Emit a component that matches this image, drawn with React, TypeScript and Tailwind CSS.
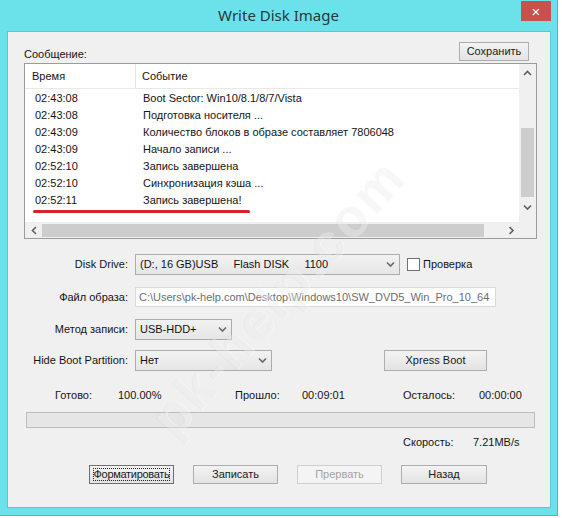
import type { ReactNode } from "react";

// ─── Data ─────────────────────────────────────────────────────────────────────

const LOG_ROWS: [string, string][] = [
  ["02:43:08", "Boot Sector: Win10/8.1/8/7/Vista"],
  ["02:43:08", "Подготовка носителя ..."],
  ["02:43:09", "Количество блоков в образе составляет 7806048"],
  ["02:43:09", "Начало записи ..."],
  ["02:52:10", "Запись завершена"],
  ["02:52:10", "Синхронизация кэша ..."],
  ["02:52:11", "Запись завершена!"],
];

// ─── Small glyphs ─────────────────────────────────────────────────────────────

function Chevron({ dir, className = "" }: { dir: "up" | "down" | "left" | "right"; className?: string }) {
  const pts = {
    up: "1,5 4.5,1.5 8,5",
    down: "1,1.5 4.5,5 8,1.5",
    left: "5,1 1.5,4.5 5,8",
    right: "1.5,1 5,4.5 1.5,8",
  }[dir];
  const vert = dir === "up" || dir === "down";
  return (
    <svg
      width={vert ? 9 : 7}
      height={vert ? 7 : 9}
      viewBox={vert ? "0 0 9 7" : "0 0 7 9"}
      className={className}
    >
      <polyline points={pts} fill="none" stroke="currentColor" strokeWidth="1.6" />
    </svg>
  );
}

function WinButton({
  children,
  className = "",
  disabled = false,
}: {
  children: ReactNode;
  className?: string;
  disabled?: boolean;
}) {
  return (
    <button
      type="button"
      className={[
        "flex items-center justify-center h-[19px] border leading-none",
        disabled
          ? "border-[#cfcfcf] bg-[#f4f4f4] text-[#a3a3a3]"
          : "border-[#adadad] bg-linear-to-b from-[#f3f3f3] to-[#e3e3e3] text-[#1a1a1a]",
        className,
      ].join(" ")}
    >
      {children}
    </button>
  );
}

function Combo({ value, className = "" }: { value: ReactNode; className?: string }) {
  return (
    <div
      className={`flex items-center h-[21px] border border-[#acacac] bg-linear-to-b from-[#f2f2f2] to-[#e6e6e6] pl-[4px] pr-[4px] ${className}`}
    >
      <span className="flex-1 whitespace-pre text-[#111]">{value}</span>
      <Chevron dir="down" className="text-[#6a6a6a]" />
    </div>
  );
}

// ─── Log list ─────────────────────────────────────────────────────────────────

function LogList() {
  return (
    <div className="ml-[16px] mt-[2px] w-[513px] h-[176px] border border-[#9b9b9b] bg-white flex flex-col">
      <div className="flex flex-1 min-h-0">
        <div className="flex-1 flex flex-col">
          {/* column header */}
          <div className="flex h-[25px] items-center border-b border-[#e8e8e8]">
            <div className="w-[111px] h-full flex items-center pl-[7px] border-r border-[#e5e5e5]">Время</div>
            <div className="pl-[6px]">Событие</div>
          </div>
          <div className="pt-[1px]">
            {LOG_ROWS.map(([time, msg], i) => (
              <div key={i} className="flex h-[17px] items-center whitespace-nowrap">
                <span className="w-[118px] pl-[10px]">{time}</span>
                <span>{msg}</span>
              </div>
            ))}
          </div>
          <div className="ml-[8px] mt-[1px] w-[217px] h-[3px] rounded-full bg-[#d8202c]" />
        </div>
        {/* vertical scrollbar */}
        <div className="w-[17px] bg-[#f0f0f0] flex flex-col items-center">
          <Chevron dir="up" className="mt-[6px] text-[#606060]" />
          <div className="mt-[51px] w-[13px] h-[69px] bg-[#cdcdcd]" />
          <Chevron dir="down" className="mt-[7px] text-[#606060]" />
        </div>
      </div>
      {/* horizontal scrollbar */}
      <div className="flex h-[16px] bg-[#f0f0f0] items-center">
        <Chevron dir="left" className="ml-[6px] text-[#606060]" />
        <div className="ml-[4px] w-[442px] h-[13px] bg-[#cdcdcd]" />
        <Chevron dir="right" className="ml-[24px] text-[#606060]" />
        <div className="ml-auto w-[17px] h-full bg-[#f0f0f0]" />
      </div>
    </div>
  );
}

// ─── Watermark ────────────────────────────────────────────────────────────────

function Watermark({ className }: { className: string }) {
  return (
    <div
      aria-hidden="true"
      className={`absolute pointer-events-none select-none text-[54px] font-bold tracking-[3px] text-[rgba(190,190,190,0.13)] [text-shadow:1px_1px_0_rgba(255,255,255,0.35)] font-['Liberation_Sans',Arial,sans-serif] origin-left -rotate-[48deg] whitespace-nowrap leading-none ${className}`}
    >
      pk-help.com
    </div>
  );
}

// ─── Main App ─────────────────────────────────────────────────────────────────

export default function App() {
  return (
    <div className="relative w-[562px] h-[518px] bg-white overflow-hidden font-['Liberation_Sans',Arial,sans-serif] text-[11px] text-[#141414]">
      <div className="w-[558px] h-[516px] bg-[#6be2ea] border-r border-b border-[#47bcc6] flex flex-col">
        {/* ── Title bar ── */}
        <div className="grid grid-cols-[1fr_auto_1fr] h-[31px]">
          <div />
          <div className="pt-[5px] text-[15px] font-['Noto_Sans',sans-serif] text-[#26393b] leading-[20px]">
            Write Disk Image
          </div>
          <div className="flex justify-end pr-[6px]">
            <div className="mt-[1px] w-[30px] h-[20px] bg-[#c9504c] flex items-center justify-center text-white text-[15px] leading-none">
              ×
            </div>
          </div>
        </div>

        {/* ── Client area ── */}
        <div className="ml-[7px] mr-[6px] h-[477px] border border-[#58c9d2] bg-[#f0f0f0] flex flex-col">
          <div className="flex items-end justify-between pt-[10px] pl-[16px] pr-[21px]">
            <span className="leading-[13px]">Сообщение:</span>
            <WinButton className="w-[70px]">Сохранить</WinButton>
          </div>

          <LogList />

          {/* drive / image settings */}
          <div className="mt-[15px] flex flex-col">
            <div className="flex items-center">
              <span className="w-[120px] text-right">Disk Drive:</span>
              <Combo className="ml-[7px] w-[265px]" value={"(D:, 16 GB)USB     Flash DISK     1100"} />
              <div className="ml-[7px] w-[13px] h-[13px] border border-[#707070] bg-white" />
              <span className="ml-[3px]">Проверка</span>
            </div>
            <div className="mt-[12px] flex items-center">
              <span className="w-[120px] text-right">Файл образа:</span>
              <div className="ml-[7px] w-[361px] h-[20px] border border-[#d9d9d9] bg-white flex items-center pl-[3px] overflow-hidden whitespace-nowrap text-[#6d6d6d]">
                C:\Users\pk-help.com\Desktop\Windows10\SW_DVD5_Win_Pro_10_64
              </div>
            </div>
            <div className="mt-[12px] flex items-center">
              <span className="w-[120px] text-right">Метод записи:</span>
              <Combo className="ml-[7px] w-[97px]" value="USB-HDD+" />
            </div>
            <div className="mt-[10px] flex items-center">
              <span className="w-[120px] text-right">Hide Boot Partition:</span>
              <Combo className="ml-[7px] w-[137px]" value="Нет" />
              <WinButton className="ml-[112px] w-[103px] h-[21px]!">Xpress Boot</WinButton>
            </div>
          </div>

          {/* progress */}
          <div className="mt-[18px] ml-[47px] grid grid-cols-[63px_117px_67px_101px_76px_auto] leading-[13px]">
            <span>Готово:</span>
            <span>100.00%</span>
            <span>Прошло:</span>
            <span>00:09:01</span>
            <span>Осталось:</span>
            <span>00:00:00</span>
          </div>
          <div className="mt-[10px] ml-[18px] w-[509px] h-[16px] border border-[#bcbcbc] bg-[#e6e6e6]" />
          <div className="mt-[8px] ml-[395px] flex leading-[13px]">
            <span className="w-[70px]">Скорость:</span>
            <span>7.21MB/s</span>
          </div>

          {/* actions */}
          <div className="mt-[16px] ml-[81px] flex gap-[19px]">
            <WinButton className="w-[85px] border-[#6f6f6f]!">
              <span className="outline-1 outline-dotted outline-[#222] tracking-[-0.3px]">Форматировать</span>
            </WinButton>
            <WinButton className="w-[85px]">Записать</WinButton>
            <WinButton className="w-[85px]" disabled>
              Прервать
            </WinButton>
            <WinButton className="w-[86px]">Назад</WinButton>
          </div>
        </div>
      </div>

      <Watermark className="left-[160px] top-[400px]" />
    </div>
  );
}
